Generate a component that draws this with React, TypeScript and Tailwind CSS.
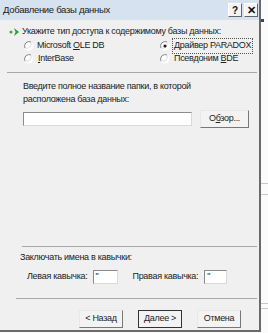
import React from "react";

const font = { fontFamily: '"Liberation Sans", Arial, sans-serif' };

function Radio({ checked }: { checked?: boolean }) {
  return (
    <svg width="10" height="10" viewBox="0 0 10 10" className="shrink-0">
      <circle cx="5" cy="5" r="4.5" fill="#ffffff" />
      <path d="M1 7 A4.5 4.5 0 0 1 7 1" stroke="#808080" strokeWidth="1" fill="none" />
      <path d="M7 1.2 A4.5 4.5 0 0 1 1.2 7" stroke="#dcdcdc" strokeWidth="1" fill="none" />
      {checked && <circle cx="5" cy="5" r="1.6" fill="#202020" />}
    </svg>
  );
}

function Btn({ children, def }: { children: React.ReactNode; def?: boolean }) {
  return (
    <div
      className={`h-[18px] w-[44px] flex items-center justify-center bg-[#f3f3f3] whitespace-nowrap ${
        def ? "border border-[#333]" : "border border-[#e8e8e8] border-b-[#777] border-r-[#777]"
      }`}
    >
      {children}
    </div>
  );
}

export default function App() {
  return (
    <div
      className="relative w-[268px] h-[333px] bg-[#fbfbfb] overflow-hidden text-[9px] tracking-[-0.3px] text-[#222] whitespace-nowrap"
      style={font}
    >
      {/* background window hints */}
      <div className="absolute left-[261px] top-[19px] w-[3px] h-[3px] bg-[#444]" />
      <div className="absolute left-[261px] top-[183px] w-[7px] h-[1px] bg-[#c8c8c8]" />
      <div className="absolute left-[261px] top-[194px] w-[7px] h-[1px] bg-[#c8c8c8]" />
      <div className="absolute left-[261px] top-[303px] w-[7px] h-[1px] bg-[#c8c8c8]" />
      <div className="absolute left-[261px] top-[308px] w-[7px] h-[1px] bg-[#c8c8c8]" />

      <div className="w-[261px] h-[332px] flex flex-col border-r-2 border-b-2 border-[#6a6a6a] bg-[#f0f0f0]">
        {/* title bar */}
        <div className="h-[20px] bg-[#d6e2f0] flex items-center pl-[3px] pr-[1px] shrink-0">
          <span className="text-[9.5px] text-[#1a1a1a] flex-1">Добавление базы данных</span>
          <div className="flex gap-[2px]">
            <div className="w-[14px] h-[14px] bg-[#f4f4f4] border border-[#fff] border-b-[#666] border-r-[#666] flex items-center justify-center text-[10px] font-bold text-[#111]">
              ?
            </div>
            <div className="w-[14px] h-[14px] bg-[#f4f4f4] border border-[#fff] border-b-[#666] border-r-[#666] flex items-center justify-center text-[11px] font-bold text-[#111]">
              ✕
            </div>
          </div>
        </div>

        <div className="flex-1 flex flex-col">
          <div className="flex items-center mt-[6px] h-[12px] ml-[9px]">
            <svg width="12" height="10" viewBox="0 0 12 10" className="mr-[1px]">
              <circle cx="2" cy="5" r="1.6" fill="#3cb040" />
              <path d="M5 1 L10 5 L5 9 L6.5 5 Z" fill="#2e9e34" />
            </svg>
            <span>Укажите тип доступа к содержимому базы данных:</span>
          </div>
          <div className="grid grid-cols-[136px_1fr] mt-[2px] ml-[24px] gap-y-[1px]">
            <div className="flex items-center h-[12px]">
              <Radio />
              <span className="ml-[3px]">
                Microsoft <u>O</u>LE DB
              </span>
            </div>
            <div className="flex items-center h-[12px]">
              <Radio checked />
              <span className="ml-[3px] px-[1px] outline outline-1 outline-dotted outline-[#555] outline-offset-0">
                <u>Д</u>райвер PARADOX
              </span>
            </div>
            <div className="flex items-center h-[12px]">
              <Radio />
              <span className="ml-[4px]">
                <u>I</u>nterBase
              </span>
            </div>
            <div className="flex items-center h-[12px]">
              <Radio />
              <span className="ml-[4px]">
                Псевдоним <u>B</u>DE
              </span>
            </div>
          </div>
          <div className="h-[1px] bg-[#a8a8a8] mt-[7px] ml-[7px] mr-[2px]" />

          <div className="mt-[7px] ml-[23px] leading-[13px]">
            Введите полное название папки, в которой
            <br />
            расположена база данных:
          </div>
          <div className="flex items-center mt-[4px] ml-[23px] h-[18px]">
            <div className="w-[169px] h-[14px] bg-white border border-[#8a8a8a] border-b-[#dadada] border-r-[#dadada]" />
            <div className="ml-[8px] w-[49px] h-[18px] bg-[#f3f3f3] border border-[#e8e8e8] border-b-[#777] border-r-[#777] flex items-center justify-center">
              <span>
                О<u>б</u>зор...
              </span>
            </div>
          </div>

          <div className="flex-1" />
          <div className="h-[1px] bg-[#a8a8a8] ml-[22px] mr-[2px]" />
          <div className="mt-[5px] ml-[20px] h-[12px] flex items-center">Заключать имена в кавычки:</div>
          <div className="flex items-center mt-[6px] ml-[27px] h-[14px]">
            <span>Левая кавычка:</span>
            <div className="ml-[5px] w-[25px] h-[14px] bg-white border border-[#8a8a8a] border-b-[#dadada] border-r-[#dadada] text-[9px] leading-[10px] pl-[2px] text-[#222]">
              "
            </div>
            <span className="ml-[15px]">Правая кавычка:</span>
            <div className="ml-[6px] w-[23px] h-[14px] bg-white border border-[#8a8a8a] border-b-[#dadada] border-r-[#dadada] text-[9px] leading-[10px] pl-[2px] text-[#222]">
              "
            </div>
          </div>
          <div className="h-[1px] bg-[#a8a8a8] mt-[14px] ml-[16px] mr-[2px]" />
          <div className="flex justify-end gap-[15px] mt-[11px] mb-[2px] mr-[18px]">
            <Btn>&lt; Назад</Btn>
            <Btn def>Далее &gt;</Btn>
            <Btn>Отмена</Btn>
          </div>
        </div>
      </div>
    </div>
  );
}
